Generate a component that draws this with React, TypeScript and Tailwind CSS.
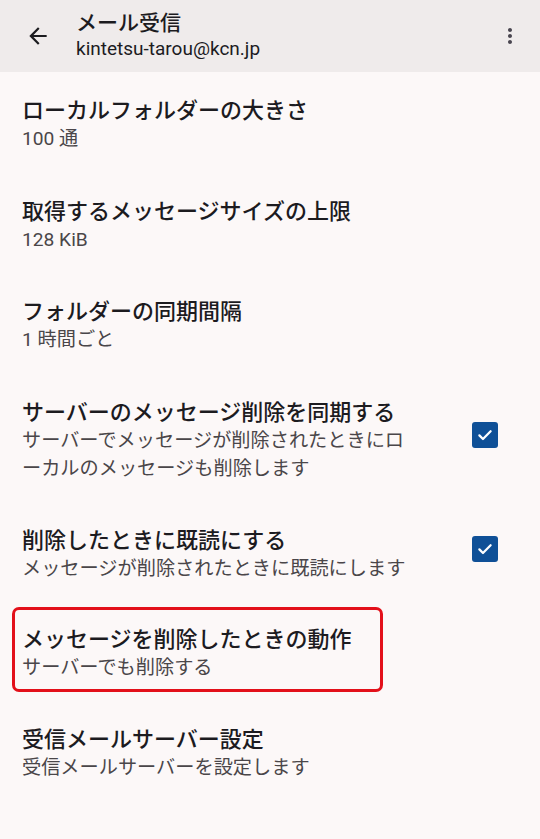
type Setting = {
  title: string;
  summary: string[];
  checked?: boolean;
  highlight?: boolean;
};

const settings: Setting[] = [
  { title: "ローカルフォルダーの大きさ", summary: ["100 通"] },
  { title: "取得するメッセージサイズの上限", summary: ["128 KiB"] },
  { title: "フォルダーの同期間隔", summary: ["1 時間ごと"] },
  {
    title: "サーバーのメッセージ削除を同期する",
    summary: ["サーバーでメッセージが削除されたときにロ", "ーカルのメッセージも削除します"],
    checked: true,
  },
  {
    title: "削除したときに既読にする",
    summary: ["メッセージが削除されたときに既読にします"],
    checked: true,
  },
  { title: "メッセージを削除したときの動作", summary: ["サーバーでも削除する"], highlight: true },
  { title: "受信メールサーバー設定", summary: ["受信メールサーバーを設定します"] },
];

function CheckBox() {
  return (
    <div className="w-[26px] h-[26px] rounded-[3px] bg-[#0f5097] flex items-center justify-center">
      <svg width="18" height="18" viewBox="0 0 24 24">
        <path d="M4.5 12.5l4.8 4.8L19.5 7" fill="none" stroke="#fff" strokeWidth="3" strokeLinecap="round" strokeLinejoin="round" />
      </svg>
    </div>
  );
}

function SettingText({ item }: { item: Setting }) {
  return (
    <div className="flex flex-col">
      <div className="text-[22px] leading-[28px] text-[#1c1b1f] font-medium">{item.title}</div>
      {item.summary.map((line) => (
        <div key={line} className="text-[19.2px] leading-[28px] text-[#4a4649]">
          {line}
        </div>
      ))}
    </div>
  );
}

function SettingRow({ item }: { item: Setting }) {
  if (item.highlight) {
    return (
      <div className="px-[12px] pt-[4px] pb-[9px]">
        <div className="w-[371px] border-[3px] border-[#e3101a] rounded-[7px] pl-[7px] pt-[16px] pb-[7px]">
          <SettingText item={item} />
        </div>
      </div>
    );
  }
  return (
    <div className="flex items-center pl-[22px] pr-[42px] pt-[25px] pb-[19.6px]">
      <div className="flex-1">
        <SettingText item={item} />
      </div>
      {item.checked && (
        <div className="mb-[12px]">
          <CheckBox />
        </div>
      )}
    </div>
  );
}

export default function App() {
  return (
    <div
      className="w-[540px] h-[839px] bg-[#fcf8f8] overflow-hidden"
      style={{ fontFamily: "Roboto, 'Noto Sans CJK JP', sans-serif" }}
    >
      <div className="h-[72px] bg-[#efebeb] flex items-center">
        <div className="w-[76px] pl-[25px] flex items-center">
          <svg width="26" height="26" viewBox="0 0 24 24">
            <path d="M20 11H7.83l5.59-5.59L12 4l-8 8 8 8 1.41-1.41L7.83 13H20v-2z" fill="#1c1b1f" />
          </svg>
        </div>
        <div className="flex-1 flex flex-col">
          <div className="text-[21px] leading-[26px] text-[#1c1b1f] font-medium">メール受信</div>
          <div className="text-[19px] leading-[26px] text-[#1c1b1f]">kintetsu-tarou@kcn.jp</div>
        </div>
        <div className="pr-[18px]">
          <svg width="24" height="24" viewBox="0 0 24 24">
            <path
              d="M12 8c1.1 0 2-.9 2-2s-.9-2-2-2-2 .9-2 2 .9 2 2 2zm0 2c-1.1 0-2 .9-2 2s.9 2 2 2 2-.9 2-2-.9-2-2-2zm0 6c-1.1 0-2 .9-2 2s.9 2 2 2 2-.9 2-2-.9-2-2-2z"
              fill="#49454f"
            />
          </svg>
        </div>
      </div>
      <div className="flex flex-col">
        {settings.map((item) => (
          <SettingRow key={item.title} item={item} />
        ))}
      </div>
    </div>
  );
}
